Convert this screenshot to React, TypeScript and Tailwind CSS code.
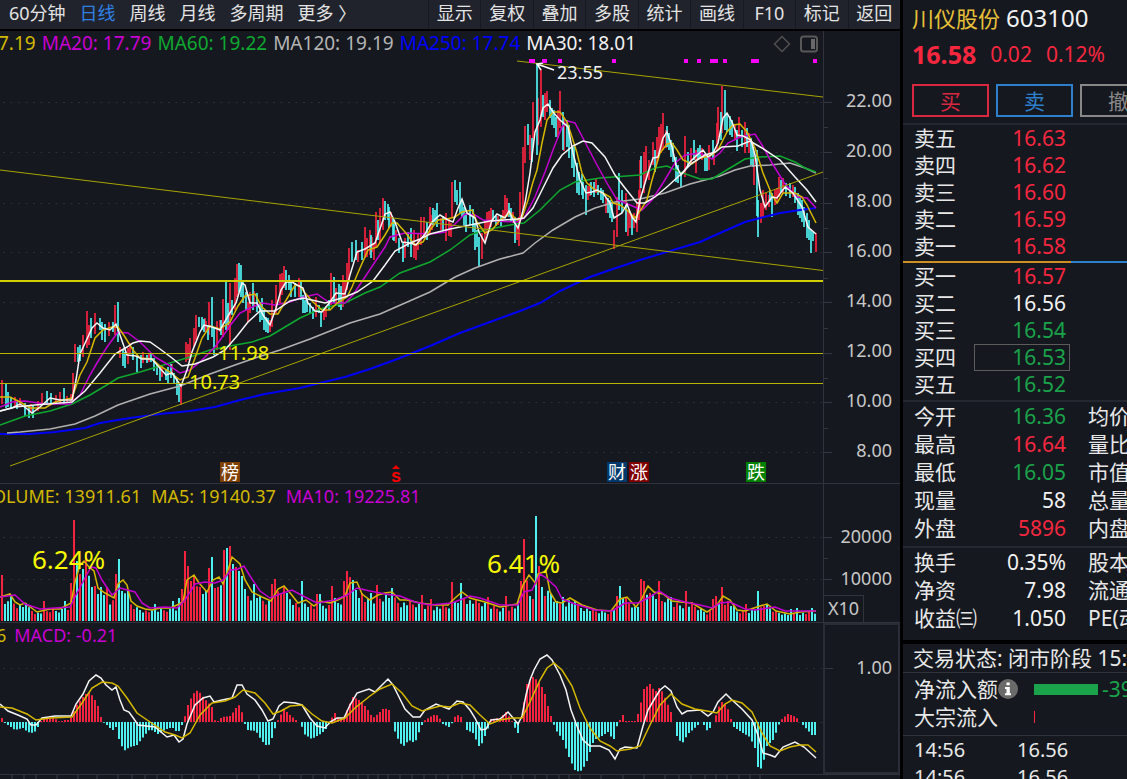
import { clsx } from "clsx";

type Point = [number, number];

const periods = ["60分钟", "日线", "周线", "月线", "多周期", "更多 〉"];
const tools = ["显示", "复权", "叠加", "多股", "统计", "画线", "F10", "标记", "返回"];

const priceLegend = [
  { text: "7.19", tone: "text-[#d2b800]" },
  { text: "MA20: 17.79", tone: "text-[#c800d2]" },
  { text: "MA60: 19.22", tone: "text-[#0fa82f]" },
  { text: "MA120: 19.19", tone: "text-[#b4b4b4]" },
  { text: "MA250: 17.74", tone: "text-[#0000ff]" },
  { text: "MA30: 18.01", tone: "text-[#f2f2f2]" },
];

const priceTicks = ["22.00", "20.00", "18.00", "16.00", "14.00", "12.00", "10.00", "8.00"];

const asks = [
  { label: "卖五", price: "16.63", tone: "text-[#f5273f]" },
  { label: "卖四", price: "16.62", tone: "text-[#f5273f]" },
  { label: "卖三", price: "16.60", tone: "text-[#f5273f]" },
  { label: "卖二", price: "16.59", tone: "text-[#f5273f]" },
  { label: "卖一", price: "16.58", tone: "text-[#f5273f]" },
];

const bids = [
  { label: "买一", price: "16.57", tone: "text-[#f5273f]" },
  { label: "买二", price: "16.56", tone: "text-[#f2f2f2]" },
  { label: "买三", price: "16.54", tone: "text-[#1aa34a]" },
  { label: "买四", price: "16.53", tone: "text-[#1aa34a]", selected: true },
  { label: "买五", price: "16.52", tone: "text-[#1aa34a]" },
];

const dayStats = [
  { label: "今开", price: "16.36", tone: "text-[#1aa34a]", next: "均价" },
  { label: "最高", price: "16.64", tone: "text-[#f5273f]", next: "量比" },
  { label: "最低", price: "16.05", tone: "text-[#1aa34a]", next: "市值" },
  { label: "现量", price: "58", tone: "text-[#f2f2f2]", next: "总量" },
  { label: "外盘", price: "5896", tone: "text-[#f5273f]", next: "内盘" },
];

const fundamentals = [
  { label: "换手", price: "0.35%", tone: "text-[#f2f2f2]", next: "股本" },
  { label: "净资", price: "7.98", tone: "text-[#f2f2f2]", next: "流通" },
  { label: "收益㈢", price: "1.050", tone: "text-[#f2f2f2]", next: "PE(动)" },
];

// high/low strokes of rising days
const risingBars =
  "M2 380V404M15 397V407M20 398V406M38 401V411M42 393V403M56 395V404M60 392V403M67 396V403M71 394V402M73 373V400M75 344V362M83 335V357M87 311V348M89 325V345M95 313V334M109 322V336M115 305V335M120 347V358M128 348V364M130 343V353M143 352V363M149 353V362M162 365V377M172 364V375M181 385V405M186 342V362M188 344V360M190 338V357M194 328V347M196 315V340M206 321V332M209 302V335M217 321V350M220 320V332M223 299V337M230 283V350M235 278V310M237 264V297M248 302V322M250 292V313M270 320V332M272 300V327M276 285V313M280 274V303M282 273V295M284 266V288M299 278V297M316 297V317M324 308V320M326 306V317M331 273V305M336 288V303M343 275V307M345 280V297M347 263V290M349 248V280M358 250V262M365 227V258M367 238V257M370 230V255M374 243V260M376 212V248M380 208V243M383 198V230M391 212V227M396 230V243M405 238V258M414 230V258M416 243V260M418 233V250M421 217V245M424 217V237M430 207V233M441 218V230M446 213V241M449 218V236M451 223V237M452 182V217M482 233V259M485 220V243M487 212V235M489 211V230M491 208V227M498 216V225M503 210V222M505 195V217M507 198V217M513 212V223M517 225V240M519 217V246M520 192V223M523 147V210M525 126V163M530 135V160M533 102V147M538 98V145M541 69V127M545 93V120M547 91V112M558 110V138M560 91V128M564 117V151M588 186V200M590 183V196M596 179V193M606 197V213M614 230V249M617 197V237M626 193V215M628 210V236M630 213V228M634 213V228M637 203V232M639 190V220M640 160V210M644 152V193M646 146V180M649 160V180M653 142V165M657 137V163M659 127V155M661 124V153M663 113V150M666 130V148M685 136V177M691 148V163M696 150V173M702 148V160M709 145V170M714 150V165M717 123V150M718 107V137M722 86V133M735 125V140M739 117V138M745 122V153M749 133V153M754 153V185M761 203V223M763 190V218M766 193V210M769 195V207M775 190V205M777 188V202M779 177V197M783 178V193M793 185V197M816 233V252M31 404V412M205 318V330M228 310V330M254 291V306M372 237V252M432 215V230";

// high/low strokes of falling days
const fallingBars =
  "M6 383V408M8 392V407M11 398V409M17 400V409M25 403V416M29 405V418M33 406V418M47 391V405M51 393V403M64 388V404M78 347V362M80 345V361M91 318V338M100 318V330M102 322V340M105 324V342M113 322V332M118 302V342M123 350V366M125 352V368M133 347V360M137 357V372M141 355V368M147 355V363M151 354V362M154 358V371M157 365V375M160 367V381M166 370V380M168 367V383M174 373V383M177 378V395M179 383V402M171 364V378M199 317V327M202 317V330M204 319V332M208 325V340M212 297V337M214 327V355M221 320V335M226 282V330M228 303V325M232 300V315M239 263V292M241 265V297M243 280V303M246 292V310M253 283V310M257 293V312M260 302V322M262 298V320M264 310V330M266 317V332M268 318V333M286 270V290M289 275V290M291 282V297M295 283V297M301 282V300M303 295V313M305 300V313M307 300V312M310 303V313M313 307V319M319 305V313M321 312V327M329 300V310M334 277V303M339 284V307M341 286V310M352 242V262M356 240V260M362 242V260M371 235V258M378 220V240M385 201V220M388 204V220M389 207V228M393 218V240M394 221V241M399 238V253M403 243V262M408 232V247M411 228V257M427 222V240M433 208V225M435 210V222M437 203V227M443 216V230M455 180V202M457 190V205M460 182V213M462 200V217M464 207V225M466 213V232M470 205V225M473 209V232M475 223V250M477 230V247M479 237V267M493 210V222M496 216V226M501 215V226M509 203V217M511 208V222M515 217V243M528 124V145M532 138V162M537 63V155M543 95V117M550 100V118M552 108V125M554 110V128M556 117V137M563 112V150M567 120V147M569 125V158M572 147V168M574 147V177M577 163V193M579 172V195M582 174V195M583 182V199M586 185V215M591 182V195M594 182V197M598 185V195M601 188V200M603 190V203M608 198V213M610 200V218M612 202V222M619 173V210M622 190V213M626 205V232M632 215V235M641 156V188M655 150V172M667 126V147M669 133V150M671 140V157M673 143V162M676 157V182M678 165V183M681 173V187M688 152V167M694 140V160M698 148V160M700 145V158M705 154V171M707 155V171M713 140V158M721 112V140M725 90V130M727 113V132M730 116V135M732 120V137M737 130V151M742 130V147M747 128V147M751 138V165M753 147V167M757 150V216M758 200V237M770 190V202M772 193V217M781 180V192M786 183V196M790 183V198M795 187V203M798 193V215M800 198V218M802 200V222M804 207V227M807 213V238M809 220V240M811 230V253M813 232V241";

const ma5 =
  "0,411 12,408 20,404 26,408 32,413 40,407 50,398 60,400 72,400 76,380 80,354 87,339 92,328 97,323 103,328 110,330 116,324 120,335 127,355 136,356 142,359 152,359 158,366 166,375 172,373 181,386 187,370 192,352 200,332 204,325 212,327 220,330 228,316 236,303 242,283 245,285 250,303 257,303 263,315 270,325 276,308 281,290 286,282 292,282 297,285 303,288 308,303 315,311 322,312 330,302 336,293 345,294 350,275 357,252 365,249 375,243 382,223 385,214 390,212 395,222 402,242 410,243 416,245 425,234 432,222 440,215 448,220 453,222 458,208 462,199 467,213 475,218 479,232 485,243 492,220 497,214 505,218 509,211 514,222 518,228 521,218 525,203 530,173 535,132 540,120 543,108 548,104 553,112 560,120 568,127 573,153 580,180 586,193 592,192 597,190 603,193 610,203 614,218 622,213 627,204 632,217 636,222 640,200 648,173 653,158 658,157 663,138 667,132 672,147 676,165 681,175 685,170 690,162 697,155 703,150 708,157 713,153 718,143 723,118 727,113 732,122 737,135 743,136 751,140 755,155 760,190 765,207 772,197 777,198 785,187 793,193 802,207 808,227 816,234";
const ma10 =
  "0,397 10,397 20,402 30,408 45,408 55,402 72,398 80,375 87,362 95,338 103,330 112,327 118,327 125,337 133,350 140,358 152,359 160,366 170,372 180,380 188,377 195,358 202,338 210,326 220,329 230,322 238,306 245,296 255,294 262,307 270,314 278,314 285,302 295,285 300,286 305,293 313,302 322,310 330,310 337,303 347,297 352,287 360,268 368,250 377,247 385,235 392,223 397,223 405,232 415,245 423,242 430,230 438,220 447,219 455,217 462,212 472,210 477,222 485,233 492,230 500,220 510,213 517,220 522,218 528,200 533,182 537,170 542,143 547,120 553,112 560,112 567,122 572,137 577,153 582,173 587,183 595,190 603,193 610,197 613,203 620,205 627,210 635,218 642,208 647,200 652,180 660,153 667,144 672,143 677,150 683,160 692,164 700,158 710,156 718,150 727,132 733,125 740,124 747,132 755,148 763,173 772,195 777,203 783,193 795,193 802,197 807,205 816,223";
const ma20 =
  "0,407 12,402 25,401 45,404 70,404 80,395 90,375 97,363 107,347 118,332 128,333 140,342 155,357 167,364 180,373 190,370 200,362 208,354 215,347 223,336 232,323 240,313 250,308 262,303 275,305 290,302 300,298 317,294 330,303 345,303 353,295 363,280 375,262 385,247 390,237 405,233 430,234 445,232 455,224 465,214 475,215 483,220 497,221 517,222 524,218 535,197 545,172 553,150 562,127 568,121 575,123 585,142 597,165 608,185 617,200 630,205 642,210 652,200 663,183 675,163 685,155 700,153 712,159 720,153 728,143 740,137 755,134 762,145 772,163 785,184 797,197 807,198 816,208";
const ma30 =
  "0,411 15,407 35,405 60,403 72,402 85,391 100,373 115,354 127,347 133,343 140,341 150,342 160,349 172,358 182,366 195,364 213,357 225,350 237,336 248,322 260,311 275,311 290,301 303,298 325,303 345,297 357,292 373,281 385,265 395,251 410,243 420,239 430,234 450,229 470,225 490,221 517,219 524,218 533,208 543,188 553,168 562,155 573,146 583,141 592,143 605,157 615,175 625,188 637,203 645,203 655,197 668,186 680,175 692,163 705,155 715,152 722,147 738,146 750,141 762,148 780,160 795,177 807,190 816,202";
const ma60 =
  "0,425 25,416 50,411 72,404 90,395 105,386 118,378 140,372 170,363 190,357 210,350 230,346 252,342 270,336 290,324 300,318 320,309 345,303 365,293 380,287 400,273 430,262 450,250 470,235 485,230 515,224 524,223 540,210 550,200 560,190 575,182 600,178 640,175 655,168 667,166 680,172 700,179 712,179 730,168 745,159 760,157 780,156 795,162 805,168 816,172";
const ma120 =
  "7,433 20,432 50,429 75,424 95,416 118,405 150,394 180,386 210,374 235,365 255,358 280,350 310,339 350,323 380,314 405,303 430,292 455,277 475,268 500,259 523,253 535,243 553,230 575,217 595,208 615,202 640,199 665,193 690,184 720,176 735,170 750,166 770,165 790,163 805,168 816,173";
const ma250 =
  "0,434 30,434 55,432 85,428 100,423 130,418 160,414 190,411 215,407 240,400 265,394 300,388 320,383 345,377 370,369 400,358 430,346 460,333 490,322 520,311 540,303 560,291 590,277 610,270 640,260 670,251 700,242 720,233 745,222 760,218 780,213 800,210 816,208";

const volMa5 =
  "0,597 10,594 15,602 20,605 25,603 37,612 50,609 60,609 71,603 75,582 80,565 84,561 89,567 94,571 98,588 105,593 114,598 118,584 123,580 127,585 131,601 137,606 145,609 152,610 160,608 170,608 177,605 183,602 187,580 194,575 199,583 207,592 213,580 219,577 223,584 228,570 232,557 240,564 245,580 252,592 262,597 271,601 278,589 284,586 291,594 298,603 306,600 314,606 320,601 330,603 340,599 345,596 350,583 357,582 362,594 370,600 378,595 385,593 392,592 400,600 407,600 420,603 435,605 448,605 455,598 462,592 470,598 485,602 500,607 517,604 523,585 529,575 533,580 536,584 538,574 546,571 550,592 556,602 562,603 570,598 582,605 597,610 611,611 620,599 627,597 636,607 641,600 648,586 654,592 663,594 672,601 680,602 692,603 707,612 717,605 723,596 730,600 737,610 745,611 760,606 767,604 776,611 790,614 800,612 816,611";
const volMa10 =
  "0,597 15,595 25,604 40,609 55,608 70,607 77,593 85,578 91,567 96,568 102,580 112,595 120,588 135,592 142,603 150,608 165,607 177,608 185,600 195,584 205,582 215,583 223,580 231,570 238,569 244,566 250,576 260,591 270,598 280,594 292,590 305,597 317,603 335,600 347,595 357,588 370,591 385,594 400,596 415,602 430,605 452,603 470,596 480,598 500,605 518,605 524,592 532,590 540,574 545,577 556,587 562,599 575,604 595,610 612,611 625,603 638,603 650,597 659,591 670,598 685,602 700,605 712,608 720,603 730,602 745,609 755,610 775,607 785,611 816,611";

const redSpikes: Point[] = [
  [1, 46], [43, 20], [53, 13], [72, 38], [74, 101], [80, 47], [87, 69], [95, 35], [106, 34], [115, 47], [120, 43],
  [181, 32], [185, 70], [187, 55], [192, 40], [195, 45], [199, 34], [209, 53], [217, 34], [223, 71], [230, 75],
  [236, 54], [249, 25], [272, 37], [275, 42], [284, 34], [317, 27], [331, 35], [343, 40], [347, 50], [349, 44],
  [362, 28], [376, 36], [421, 26], [430, 22], [452, 39], [487, 24], [505, 25], [520, 40], [523, 82], [525, 55],
  [534, 22], [538, 55], [541, 33], [546, 25], [617, 25], [640, 42], [645, 40], [650, 28], [658, 40], [663, 20],
  [685, 30], [693, 19], [712, 22], [717, 25], [722, 34], [727, 20], [745, 17], [764, 15],
];
const cyanSpikes: Point[] = [
  [3, 34], [6, 17], [20, 16], [25, 18], [64, 20], [78, 60], [83, 52], [91, 34], [97, 27], [101, 34], [118, 62],
  [123, 30], [154, 17], [172, 20], [178, 23], [202, 27], [205, 30], [212, 64], [226, 73], [232, 57], [239, 50],
  [241, 45], [245, 32], [253, 37], [258, 23], [288, 28], [302, 40], [320, 27], [335, 23], [352, 41], [371, 28],
  [392, 33], [460, 38], [530, 25], [536, 105], [543, 34], [556, 20], [563, 24], [576, 20], [619, 35], [622, 23],
  [642, 38], [672, 24], [721, 28], [757, 30], [790, 12], [797, 13], [811, 13],
];

const macdShape: Point[] = [
  [0, 6], [3, 3], [5, -1], [8, -3], [15, -8], [23, -6], [28, -10], [34, -11], [38, -5], [40, 0], [43, 3], [48, 4],
  [54, 4], [57, 2], [60, 0], [64, 2], [70, 2], [73, 8], [76, 16], [82, 24], [88, 30], [93, 26], [98, 16], [101, 5],
  [103, 0], [106, -2], [110, -6], [113, -8], [116, -5], [119, -17], [124, -29], [130, -25], [137, -23], [145, -13],
  [150, -7], [158, -12], [165, -8], [172, -5], [178, -11], [182, -3], [184, 2], [188, 17], [193, 28], [198, 32],
  [204, 24], [212, 15], [214, 2], [218, 1], [222, 5], [230, 6], [235, 12], [238, 18], [241, 14], [244, 1], [247, -8],
  [256, -9], [262, -19], [268, -25], [272, -16], [276, -3], [279, 4], [284, 13], [290, 7], [296, 2], [301, -1],
  [304, -12], [312, -17], [322, -11], [328, -5], [331, 3], [335, 9], [339, 3], [343, 3], [347, 12], [353, 25],
  [359, 22], [366, 15], [373, 4], [378, 8], [384, 14], [389, 12], [393, -4], [397, -15], [403, -25], [409, -18],
  [415, -21], [421, -5], [424, 1], [430, 5], [436, 8], [441, 2], [443, -2], [449, -5], [453, 0], [456, 8], [461, 5],
  [464, 0], [467, -8], [473, -11], [480, -26], [485, -14], [489, -4], [491, 3], [500, 4], [506, 10], [511, 3],
  [514, -4], [518, -11], [521, 0], [523, 14], [527, 38], [533, 45], [537, 42], [544, 32], [549, 12], [553, 0],
  [556, -8], [563, -18], [569, -35], [575, -48], [580, -50], [586, -42], [594, -18], [602, -14], [608, -10],
  [612, -16], [614, -17], [618, 0], [621, 3], [623, 7], [626, 1], [636, 1], [640, 15], [644, 33], [650, 38],
  [655, 30], [660, 35], [666, 22], [671, 10], [674, 0], [677, -14], [682, -22], [688, -12], [697, -4], [701, 0],
  [704, -3], [708, -10], [712, -2], [715, 3], [718, 14], [722, 20], [727, 16], [731, 3], [734, -5], [743, -11],
  [750, -15], [755, -26], [758, -45], [762, -47], [767, -24], [773, -18], [778, -6], [780, 1], [788, 8], [796, 5],
  [800, 0], [804, -4], [812, -13], [816, -13],
];

const dif =
  "0,704 8,711 18,715 27,719 31,725 36,725 42,718 55,716 71,716 76,704 83,694 89,681 96,675 101,678 106,685 112,690 116,687 120,700 124,710 129,712 134,719 138,725 155,727 167,737 174,735 179,742 183,739 187,724 195,705 203,698 210,696 214,702 222,700 232,698 237,685 242,685 247,694 255,700 262,710 268,721 273,719 279,706 284,702 295,703 302,705 310,718 317,726 325,728 330,722 337,718 344,718 350,705 357,693 369,689 375,692 380,687 388,679 393,685 398,695 405,709 413,717 420,717 425,710 436,704 449,709 457,701 463,702 470,710 475,718 481,730 486,729 491,720 500,719 508,712 514,719 518,724 522,716 526,695 530,680 534,670 540,659 547,655 552,660 560,675 566,690 571,710 577,726 583,740 590,746 600,746 609,750 615,759 620,749 625,747 637,748 643,726 648,710 655,698 660,690 665,686 671,691 677,707 682,714 687,711 700,710 708,716 713,712 718,702 726,694 732,700 742,709 752,720 758,735 763,753 770,755 775,757 783,747 795,742 804,747 816,758";
const dea =
  "0,707 12,708 27,714 36,720 50,718 72,717 82,703 92,688 102,682 112,683 118,686 127,698 137,713 150,722 165,732 175,735 182,738 190,733 200,715 212,703 225,701 235,697 243,690 255,693 265,703 273,714 281,711 290,706 302,705 312,714 322,721 332,723 345,718 355,708 370,696 380,689 392,684 402,693 412,706 422,711 440,706 450,707 460,703 470,705 480,715 490,724 500,720 512,718 522,718 530,702 540,680 547,668 554,663 562,670 572,686 580,708 590,728 600,741 610,746 617,751 630,749 640,746 650,725 660,705 671,694 682,704 695,709 707,711 717,713 725,704 732,700 742,703 752,712 762,733 770,746 780,751 790,747 800,745 808,745 816,752";

const BAR_STEP = 3;
const BAR_COUNT = 272;
const VOLUME_BASE = 621;
const MACD_BASE = 722;

function parsePoints(points: string): Point[] {
  return points.split(" ").map((p) => p.split(",").map(Number) as Point);
}

function valueAt(points: Point[], x: number) {
  const next = points.findIndex((p) => p[0] >= x);
  if (next === -1) return points[points.length - 1][1];
  if (next === 0) return points[0][1];
  const [x0, y0] = points[next - 1];
  const [x1, y1] = points[next];
  return y0 + ((y1 - y0) * (x - x0)) / (x1 - x0);
}

function spikeNear(spikes: Point[], x: number) {
  const near = spikes.filter((s) => Math.abs(s[0] - x) <= BAR_STEP / 2).map((s) => s[1]);
  return near.length ? Math.max(...near) : 0;
}

function buildVolume() {
  const average = parsePoints(volMa5);
  let red = "";
  let cyan = "";
  for (let i = 0; i < BAR_COUNT; i++) {
    const x = 2 + i * BAR_STEP;
    const up = spikeNear(redSpikes, x);
    const down = spikeNear(cyanSpikes, x);
    const noise = ((i * 7919) % 97) / 97;
    const level = (VOLUME_BASE - valueAt(average, x)) * (0.65 + noise * 0.35);
    const height = Math.max(up, down) || level;
    const segment = `M${x} ${VOLUME_BASE}v${-height.toFixed(1)}`;
    if (up > down || (!down && (i * 31) % 11 < 4)) red += segment;
    else cyan += segment;
  }
  return { red, cyan };
}

function buildMacd() {
  let red = "";
  let cyan = "";
  for (let i = 0; i < BAR_COUNT; i++) {
    const x = 2 + i * BAR_STEP;
    const value = valueAt(macdShape, x);
    if (Math.abs(value) < 0.5) continue;
    const segment = `M${x} ${MACD_BASE}v${(-value).toFixed(1)}`;
    if (value > 0) red += segment;
    else cyan += segment;
  }
  return { red, cyan };
}

const volume = buildVolume();
const macd = buildMacd();

function Line({ points, color, width = 1.5 }: { points: string; color: string; width?: number }) {
  return <polyline points={points} fill="none" stroke={color} strokeWidth={width} />;
}

function Grid({ rows }: { rows: number[] }) {
  return (
    <g stroke="#2b2e36" strokeDasharray="2 5.5">
      {rows.map((y) => (
        <line key={y} x1="3" x2="823" y1={y} y2={y} />
      ))}
    </g>
  );
}

function PriceChart() {
  return (
    <svg className="block h-[452px] w-full" viewBox="0 31 823 452" preserveAspectRatio="none" aria-hidden="true">
      <Grid rows={[102.5, 152.5, 203.5, 252.5, 302.5, 353.5, 402.5, 452.5]} />
      <g strokeWidth="1.7">
        <path d={risingBars} stroke="#f5233f" />
        <path d={fallingBars} stroke="#4ff0f0" />
      </g>
      <Line points={ma250} color="#0000f5" width={2} />
      <Line points={ma120} color="#b0b0b0" />
      <Line points={ma60} color="#0fa82f" />
      <Line points={ma20} color="#c400d0" />
      <Line points={ma10} color="#d6b800" />
      <Line points={ma30} color="#f5f5f5" />
      <Line points={ma5} color="#f5f5f5" />
      <g stroke="#a8a400">
        <path d="M0 170L823 270.500M10 466L823 172M517 61L823 97" />
        <path d="M0 353.500H823M0 383.500H823" stroke="#b8b400" />
        <path d="M0 281H823" stroke="#d2ce00" strokeWidth="2" />
      </g>
      <path d="M554 70L537 64M543 63L537 64L541 70" fill="none" stroke="#fff" strokeWidth="1.500" />
      <path
        d="M529 61h6M542 61h5M558 61h4M612 61h4M684 61h4M697 61h4M710 61h8M723 61h4M751 61h8M813 61h4"
        stroke="#ff00ff"
        strokeWidth="4"
      />
    </svg>
  );
}

function VolumeChart() {
  return (
    <svg className="block h-[138px] w-full" viewBox="0 484 823 138" preserveAspectRatio="none" aria-hidden="true">
      <Grid rows={[537.5, 579.5]} />
      <g strokeWidth="2">
        <path d={volume.red} stroke="#f5233f" />
        <path d={volume.cyan} stroke="#4ff0f0" />
      </g>
      <Line points={volMa5} color="#d6b800" />
      <Line points={volMa10} color="#c400d0" />
    </svg>
  );
}

function MacdChart() {
  return (
    <svg className="block h-[151px] w-full" viewBox="0 623 823 151" preserveAspectRatio="none" aria-hidden="true">
      <Grid rows={[668.5, 722.5]} />
      <g strokeWidth="2">
        <path d={macd.red} stroke="#f5233f" />
        <path d={macd.cyan} stroke="#4ff0f0" />
      </g>
      <Line points={dif} color="#f5f5f5" />
      <Line points={dea} color="#d6b800" />
    </svg>
  );
}

function Toolbar() {
  return (
    <nav className="flex h-[31px] items-stretch justify-between border-b-2 border-black bg-[#20232c] text-lg leading-6 text-[#e4e4e4]">
      <div className="flex gap-3.5 pl-[9px]">
        {periods.map((period) => (
          <button key={period} type="button" className={clsx("pb-1", period === "日线" && "text-[#2f80e4]")}>
            {period}
          </button>
        ))}
      </div>
      <div className="grid w-[472px] grid-cols-9">
        {tools.map((tool) => (
          <button key={tool} type="button" className="border-l border-[#171920] pb-1">
            {tool}
          </button>
        ))}
      </div>
    </nav>
  );
}

function QuoteTable({ rows, rowClass }: { rows: typeof dayStats | typeof bids | typeof asks; rowClass: string }) {
  return (
    <table className="w-[260px] table-fixed border-collapse">
      <tbody>
        {rows.map((row) => (
          <tr key={row.label} className={rowClass}>
            <th scope="row" className="w-[71px] p-0 pl-[11px] text-left text-[21px] font-normal text-[#e8e8e8]">
              {row.label}
            </th>
            <td className={clsx("w-[96px] p-0 text-right text-[21px]", row.tone)}>
              <span
                className={clsx(
                  "block pr-1",
                  "selected" in row && row.selected && "outline outline-1 -outline-offset-1 outline-[#5c5c5c]",
                )}
              >
                {row.price}
              </span>
            </td>
            <td className="p-0 pl-[18px] text-[21px] text-[#e8e8e8]">{"next" in row ? row.next : null}</td>
          </tr>
        ))}
      </tbody>
    </table>
  );
}

function QuotePanel() {
  return (
    <aside className="w-[227px] shrink-0 overflow-hidden whitespace-nowrap border-l-3 border-black">
      <header className="flex h-9 items-center gap-1.5 pl-[9px]">
        <h1 className="text-[22px] text-[#e8c038]">川仪股份</h1>
        <span className="text-2xl leading-9 text-[#f2f2f2]">603100</span>
      </header>
      <div className="flex h-[38px] items-center gap-3.5 pl-[9px] text-[21px] text-[#f5273f]">
        <strong className="text-[25px] font-bold">16.58</strong>
        <span>0.02</span>
        <span>0.12%</span>
      </div>
      <div className="flex h-[51px] gap-[7px] border-b-2 border-[#252730] pl-[9px] pt-2.5 text-[21px] leading-7">
        <button type="button" className="h-[33px] w-[77px] shrink-0 border-2 border-[#d92740] text-[#d92740]">
          买
        </button>
        <button type="button" className="h-[33px] w-[77px] shrink-0 border-2 border-[#2f80cc] text-[#2f80cc]">
          卖
        </button>
        <button type="button" className="h-[33px] w-[77px] shrink-0 border-2 border-[#888] text-[#888]">
          撤
        </button>
      </div>

      <QuoteTable rows={asks} rowClass="h-[27px] leading-[27px]" />
      <div className="mt-px flex h-0.5">
        <span className="w-[168px] bg-[#d09020]" />
        <span className="flex-1 bg-[#2f80cc]" />
      </div>
      <QuoteTable rows={bids} rowClass="h-[27px] leading-[27px]" />
      <div className="mt-0.5 border-t-2 border-[#252730] pb-1">
        <QuoteTable rows={dayStats} rowClass="h-7 leading-7" />
      </div>
      <div className="border-t-2 border-[#252730] pb-2">
        <QuoteTable rows={fundamentals} rowClass="h-7 leading-7" />
      </div>

      <div className="h-8 border-t-4 border-black pl-[10px] text-[21px] leading-7 text-[#e8e8e8]">交易状态: 闭市阶段 15:00</div>
      <div className="border-y border-[#30323c] pb-1 pt-0.5 pl-[11px] text-[21px] leading-7 text-[#e8e8e8]">
        <div className="flex h-7 items-center">
          <span>净流入额</span>
          <button
            type="button"
            aria-label="说明"
            className="flex size-5 shrink-0 items-center justify-center rounded-full bg-[#6a6a6a]"
          >
            <svg viewBox="0 0 20 20" className="size-5" fill="#fff" aria-hidden="true">
              <path d="M8.500 3.500h3.200v2.700H8.500zM7 8h4.800v6.200H13v2H7v-2h1.500V10H7z" />
            </svg>
          </button>
          <span className="ml-4 h-[11px] w-16 shrink-0 bg-[#1aa34a]" />
          <span className="ml-1 text-[21px] text-[#1aa34a]">-39.1</span>
        </div>
        <div className="flex h-7 items-center">
          <span>大宗流入</span>
          <span className="ml-9 h-3 w-px shrink-0 bg-[#f5273f]" />
        </div>
      </div>
      <table className="table-fixed text-[20px] leading-[27px] text-[#e8e8e8]">
        <tbody>
          {[0, 1].map((row) => (
            <tr key={row}>
              <td className="w-[103px] p-0 pl-[11px]">14:56</td>
              <td className="p-0 pl-[11px]">16.56</td>
            </tr>
          ))}
        </tbody>
      </table>
    </aside>
  );
}

function AxisTicks({ path, viewBox }: { path: string; viewBox: string }) {
  return (
    <svg className="absolute inset-y-0 left-0 h-full w-2" viewBox={viewBox} preserveAspectRatio="none" aria-hidden="true">
      <path d={path} stroke="#33353f" />
    </svg>
  );
}

export default function App() {
  return (
    <div className="flex h-screen overflow-hidden bg-[#15181f] font-['Noto_Sans','Noto_Sans_CJK_SC',sans-serif]">
      <main className="min-w-0 flex-1">
        <Toolbar />

        <section className="flex border-b border-[#30323c]">
          <div className="relative min-w-0 flex-1 overflow-hidden">
            <PriceChart />
            <div className="absolute -left-0.5 top-0 flex h-6 items-center gap-1.5 whitespace-nowrap text-[19px] leading-6">
              {priceLegend.map((item) => (
                <span key={item.text} className={item.tone}>
                  {item.text}
                </span>
              ))}
            </div>
            <div className="absolute right-1 top-1 flex items-center gap-2">
              <button type="button" aria-label="菱形标记">
                <svg viewBox="0 0 18 18" className="size-[18px]" fill="none" stroke="#505050" strokeWidth="1.500" aria-hidden="true">
                  <path d="M9 1.500L16.500 9L9 16.500L1.500 9Z" />
                </svg>
              </button>
              <button type="button" aria-label="侧栏">
                <svg viewBox="0 0 20 18" className="h-[18px] w-5" fill="none" stroke="#585858" strokeWidth="2" aria-hidden="true">
                  <rect x="2" y="1.500" width="16" height="15" rx="2.500" />
                  <rect x="12" y="4" width="4" height="10" fill="#686868" stroke="none" />
                </svg>
              </button>
            </div>
            <span className="absolute left-[557px] top-[27px] text-[18px] leading-7 text-[#f2f2f2]">23.55</span>
            <span className="absolute left-[218px] top-[308px] text-[20px] leading-7 text-[#f0f000]">11.98</span>
            <span className="absolute left-[189px] top-[337px] text-[20px] leading-7 text-[#f0f000]">10.73</span>
            <span className="absolute left-[220px] top-[431px] w-5 bg-[#7f3f00] text-center text-[18px] leading-5 text-white">榜</span>
            <span className="absolute left-[391px] top-[434px] flex flex-col items-center font-['Liberation_Sans',sans-serif] text-[18px] font-bold leading-[14px] text-[#f00000]">
              <svg viewBox="0 0 8 4" className="h-1 w-2" fill="currentColor" aria-hidden="true">
                <path d="M0 4L4 0L8 4Z" />
              </svg>
              <span className="underline">s</span>
            </span>
            <span className="absolute left-[607px] top-[431px] w-5 bg-[#003a6c] text-center text-[18px] leading-5 text-white">财</span>
            <span className="absolute left-[629px] top-[431px] w-5 bg-[#800000] text-center text-[18px] leading-5 text-white">涨</span>
            <span className="absolute left-[746px] top-[431px] w-5 bg-[#008000] text-center text-[18px] leading-5 text-white">跌</span>
          </div>
          <div className="relative w-[77px] shrink-0 border-l border-[#30323c] pr-2 pt-11 text-right text-[18px] text-[#c8c8c8]">
            <AxisTicks
              viewBox="0 31 8 452"
              path="M0 102.500H8M0 152.500H8M0 203.500H8M0 252.500H8M0 302.500H8M0 353.500H8M0 402.500H8M0 452.500H8M0 127.500H4M0 178.500H4M0 228.500H4M0 278.500H4M0 328.500H4M0 378.500H4M0 428.500H4"
            />
            {priceTicks.map((tick) => (
              <div key={tick} className="h-[50px] leading-[50px]">
                {tick}
              </div>
            ))}
          </div>
        </section>

        <section className="flex">
          <div className="relative min-w-0 flex-1 overflow-hidden">
            <VolumeChart />
            <div className="absolute -left-2 top-0 flex h-6 items-center gap-2.5 whitespace-nowrap text-[18px] leading-6">
              <span className="text-[#d2b800]">OLUME: 13911.61</span>
              <span className="text-[#d2b800]">MA5: 19140.37</span>
              <span className="text-[#c800d2]">MA10: 19225.81</span>
            </div>
            <span className="absolute left-8 top-[59px] text-[26px] leading-8 text-[#f8f800]">6.24%</span>
            <span className="absolute left-[487px] top-[63px] text-[26px] leading-8 text-[#f8f800]">6.41%</span>
          </div>
          <div className="relative flex w-[77px] shrink-0 flex-col border-l border-[#30323c] pt-[31px] text-right text-[18px] text-[#c8c8c8]">
            <AxisTicks viewBox="0 484 8 138" path="M0 537.500H8M0 579.500H8M0 558.500H4" />
            <div className="h-[42px] pr-2 leading-[42px]">20000</div>
            <div className="h-[38px] pr-2 leading-[42px]">10000</div>
            <div className="mt-auto h-[27px] w-10 border-r border-t border-[#30323c] pl-1 text-left leading-6">X10</div>
          </div>
        </section>

        <section className="flex border-y border-[#30323c]">
          <div className="relative min-w-0 flex-1 overflow-hidden">
            <MacdChart />
            <div className="absolute -left-1 top-0 flex h-6 items-center gap-2 whitespace-nowrap text-[18px] leading-6">
              <span className="text-[#d2b800]">6</span>
              <span className="text-[#c800d2]">MACD: -0.21</span>
            </div>
          </div>
          <div className="relative w-[77px] shrink-0 border-2 border-[#2a2c38] pr-1.5 pt-[30px] text-right text-[18px] leading-6 text-[#c8c8c8]">
            <AxisTicks viewBox="0 625 8 147" path="M0 668.500H8" />
            1.00
          </div>
        </section>
        <svg className="block h-1 w-full" viewBox="0 0 900 4" preserveAspectRatio="none" aria-hidden="true">
          <path
            d="M12 0V4M24 0V4M36 0V4M57 0V4M78 0V4M97 0V4M118 0V4M132 0V4M145 0V4M157 0V4M170 0V4M182 0V4M193 0V4M205 0V4M215 0V4M237 0V4M259 0V4M280 0V4M301 0V4M313 0V4M325 0V4M335 0V4M348 0V4M358 0V4M368 0V4M378 0V4M388 0V4M400 0V4M412 0V4M424 0V4M436 0V4M448 0V4M462 0V4M474 0V4M486 0V4M498 0V4M511 0V4M523 0V4M535 0V4M547 0V4M559 0V4M569 0V4M580 0V4M601 0V4M623 0V4M644 0V4M665 0V4M679 0V4M691 0V4M705 0V4M716 0V4M727 0V4M739 0V4M750 0V4M760 0V4"
            stroke="#3a3c46"
          />
        </svg>
      </main>
      <QuotePanel />
    </div>
  );
}
